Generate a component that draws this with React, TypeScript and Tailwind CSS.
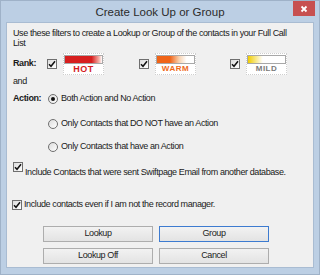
import React from "react";

const Check = () => (
  <span className="w-[10px] h-[10px] border border-[#6f6f6f] bg-[linear-gradient(135deg,#dcdcdc,#ffffff)] flex items-center justify-center shrink-0">
    <svg width="8" height="8" viewBox="0 0 8 8">
      <path d="M1 4.2 L3 6.3 L7 1.2" stroke="#111" strokeWidth="1.5" fill="none" />
    </svg>
  </span>
);

const Radio = ({ on }: { on?: boolean }) => (
  <span className="w-[10px] h-[10px] rounded-full border border-[#6f6f6f] bg-[linear-gradient(135deg,#dcdcdc,#ffffff)] flex items-center justify-center shrink-0">
    {on && <span className="w-[4px] h-[4px] rounded-full bg-[#111]" />}
  </span>
);

const Badge = ({ label, bar, text }: { label: string; bar: string; text: string }) => (
  <div className="w-[41px] h-[22px] bg-white border border-dotted border-[#cfcfcf] flex flex-col items-center pt-[1px]">
    <div className={`w-[39px] h-[10px] border border-[#a8a8a8] ${bar}`} />
    <div className={`text-[8px] leading-[10px] font-bold tracking-[0.5px] ${text}`}>{label}</div>
  </div>
);

const Btn = ({ label, focus }: { label: string; focus?: boolean }) => (
  <div
    className={`w-[110px] h-[16px] flex items-center justify-center border bg-[linear-gradient(#f2f2f2,#e3e3e3)] text-[9px] text-[#222] ${
      focus ? "border-[#3d7bd0]" : "border-[#adadad]"
    }`}
  >
    {label}
  </div>
);

export default function App() {
  return (
    <div
      className="w-[320px] h-[275px] bg-[#bccfe4] border border-[#9fb2c8] flex flex-col overflow-hidden"
      style={{ fontFamily: '"Liberation Sans", Arial, sans-serif' }}
    >
      <div className="h-[21px] relative flex items-center justify-center shrink-0">
        <span className="text-[11.5px] text-[#2b2b2b] mt-[2px]">Create Look Up or Group</span>
        <div className="absolute right-[4px] top-0 w-[22px] h-[15px] bg-[#c75050] flex items-center justify-center">
          <svg width="8" height="8" viewBox="0 0 8 8">
            <path d="M1.5 1.5 L6.5 6.5 M6.5 1.5 L1.5 6.5" stroke="#fff" strokeWidth="1.8" />
          </svg>
        </div>
      </div>
      <div className="mx-[5px] mb-[6px] flex-1 bg-[#f0f0f0] border border-[#a9bcd2] pl-[6px] pt-[5px] text-[9px] text-[#1a1a1a] tracking-[-0.4px] flex flex-col">
        <div className="leading-[10px]">
          Use these filters to create a Lookup or Group of the contacts in your Full Call
          <br />
          List
        </div>
        <div className="h-[22px] mt-[5px] flex items-center">
          <span className="w-[34px] font-bold">Rank:</span>
          <Check />
          <div className="ml-[6px]">
            <Badge
              label="HOT"
              bar="bg-[linear-gradient(to_right,#d71f1f_0%,#d71f1f_72%,#f4b0a8_92%,#ffffff_100%)]"
              text="text-[#d41c1c] text-[9px]"
            />
          </div>
          <div className="ml-[35px]">
            <Check />
          </div>
          <div className="ml-[6px]">
            <Badge
              label="WARM"
              bar="bg-[linear-gradient(to_right,#f06418_0%,#f06418_35%,#f8d2b0_60%,#ffffff_80%)]"
              text="text-[#ef6a1a]"
            />
          </div>
          <div className="ml-[34px]">
            <Check />
          </div>
          <div className="ml-[6px]">
            <Badge
              label="MILD"
              bar="bg-[linear-gradient(to_right,#f0cc00_0%,#f6e060_15%,#ffffff_40%)]"
              text="text-[#7a7a7a]"
            />
          </div>
        </div>
        <div className="leading-[10px] mt-[1px]">and</div>
        <div className="h-[12px] mt-[7px] flex items-center">
          <span className="w-[35px] font-bold">Action:</span>
          <Radio on />
          <span className="ml-[3px]">Both Action and No Action</span>
        </div>
        <div className="h-[12px] mt-[13px] flex items-center pl-[35px]">
          <Radio />
          <span className="ml-[3px]">Only Contacts that DO NOT have an Action</span>
        </div>
        <div className="h-[12px] mt-[11px] flex items-center pl-[35px]">
          <Radio />
          <span className="ml-[3px]">Only Contacts that have an Action</span>
        </div>
        <div className="h-[16px] mt-[9px] flex items-start">
          <Check />
          <span className="ml-[2px] mt-[5px] leading-[10px]">
            Include Contacts that were sent Swiftpage Email from another database.
          </span>
        </div>
        <div className="h-[12px] mt-[21px] flex items-center -ml-[1px]">
          <Check />
          <span className="ml-[2px]">Include contacts even if I am not the record manager.</span>
        </div>
        <div className="mt-[15px] pl-[30px] grid grid-cols-[110px_110px] gap-x-[6px] gap-y-[6px]">
          <Btn label="Lookup" />
          <Btn label="Group" focus />
          <Btn label="Lookup Off" />
          <Btn label="Cancel" />
        </div>
      </div>
    </div>
  );
}
